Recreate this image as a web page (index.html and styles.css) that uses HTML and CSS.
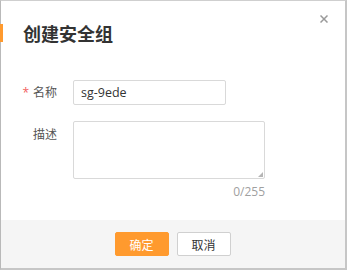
FILE: index.html
```html
<!DOCTYPE html>
<html lang="zh">
<head>
<meta charset="utf-8">
<link rel="stylesheet" href="styles.css">
</head>
<body>
<div class="dialog">
  <div class="header">
    <h1 class="title">创建安全组</h1>
    <span class="close" aria-label="关闭">
      <svg width="8" height="8" viewBox="0 0 8 8"><path d="M0.5 0.5L7.5 7.5M7.5 0.5L0.5 7.5" stroke="#9a9a9a" stroke-width="1.5" fill="none"/></svg>
    </span>
  </div>
  <div class="body">
    <div class="row">
      <label class="label"><span class="req">*</span>名称</label>
      <div class="input">sg-9ede</div>
    </div>
    <div class="row row-top">
      <label class="label label-top">描述</label>
      <div class="field">
        <div class="textarea">
          <svg class="grip" width="5" height="5" viewBox="0 0 5 5"><path d="M5 0L5 5L0 5Z" fill="#b5b5b5"/></svg>
        </div>
        <div class="count">0/255</div>
      </div>
    </div>
  </div>
  <div class="footer">
    <button class="btn btn-primary">确定</button>
    <button class="btn btn-default">取消</button>
  </div>
</div>
</body>
</html>
```
FILE: styles.css
```css
* { box-sizing: border-box; }
html, body { margin: 0; padding: 0; background: #fff; }
body {
  width: 347px;
  height: 270px;
  overflow: hidden;
  font-family: "Open Sans", "Noto Sans CJK SC", sans-serif;
  color: #333;
}
.dialog {
  width: 347px;
  height: 270px;
  border-top: 1px solid #cfcfcf;
  border-left: 1px solid #b9b9b9;
  border-right: 2px solid #c6c6c6;
  border-bottom: 2px solid #c6c6c6;
  display: flex;
  flex-direction: column;
  position: relative;
  background: #fff;
}
.header {
  padding-top: 23px;
  height: 79px;
}
.title {
  margin: 0;
  height: 18px;
  line-height: 18px;
  font-size: 18px;
  font-weight: bold;
  color: #333;
  font-family: "Noto Sans CJK SC", sans-serif;
  padding-left: 22px;
  border-left: 3px solid #ff9a2e;
  margin-left: -1px;
  padding-left: 20px;
  display: flex;
  align-items: center;
}
.close {
  position: absolute;
  top: 14px;
  right: 17px;
  width: 8px;
  height: 8px;
  display: block;
  line-height: 0;
}
.body {
  display: flex;
  flex-direction: column;
  gap: 16px;
}
.row {
  display: flex;
  align-items: center;
}
.row-top { align-items: flex-start; }
.label {
  width: 56px;
  margin-right: 16px;
  text-align: right;
  font-size: 12px;
  line-height: 16px;
  color: #555;
  font-family: "Noto Sans CJK SC", sans-serif;
}
.label-top { padding-top: 5px; }
.req {
  color: #f25e5e;
  margin-right: 4px;
  font-family: "Open Sans", sans-serif;
}
.input {
  width: 153px;
  height: 25px;
  border: 1px solid #d9d9d9;
  border-radius: 2px;
  padding-left: 7px;
  font-size: 12.5px;
  line-height: 23px;
  color: #333;
}
.field {
  display: flex;
  flex-direction: column;
  align-items: flex-end;
}
.textarea {
  width: 192px;
  height: 58px;
  border: 1px solid #d9d9d9;
  border-radius: 2px;
  position: relative;
}
.grip {
  position: absolute;
  right: 1px;
  bottom: 1px;
}
.count {
  margin-top: 5px;
  font-size: 12px;
  line-height: 16px;
  color: #a0a0a0;
}
.footer {
  margin-top: auto;
  height: 48px;
  background: #f5f5f5;
  display: flex;
  justify-content: center;
  align-items: center;
  gap: 8px;
  padding-right: 1px;
}
.btn {
  width: 54px;
  height: 24px;
  font-size: 12px;
  font-family: "Noto Sans CJK SC", sans-serif;
  border-radius: 2px;
  padding: 0;
  cursor: pointer;
}
.btn-primary {
  background: #ff9a2e;
  border: 1px solid #ff9a2e;
  color: #fff;
}
.btn-default {
  background: #fff;
  border: 1px solid #d0d0d0;
  color: #333;
}
```
